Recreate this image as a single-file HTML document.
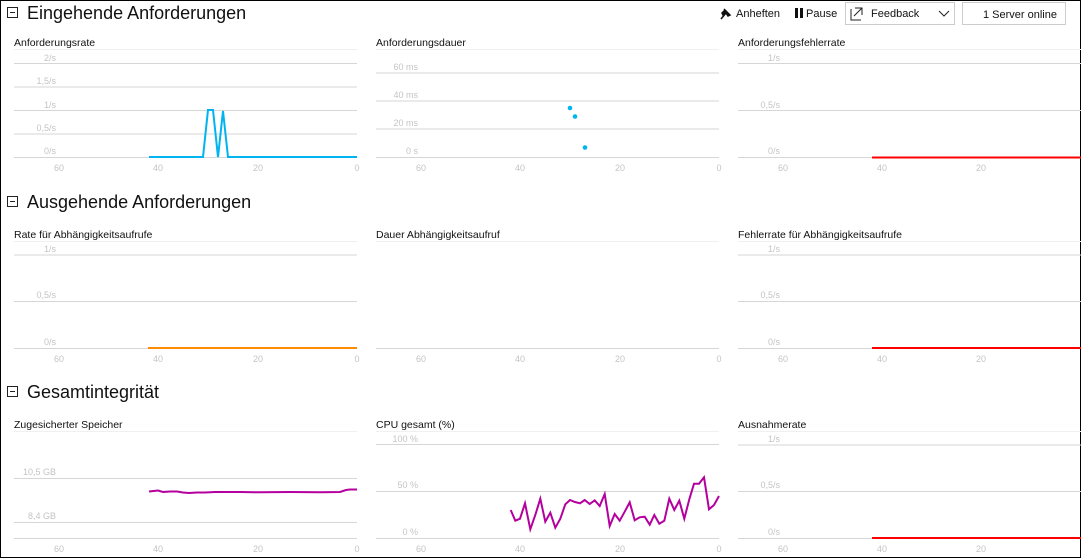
<!DOCTYPE html>
<html><head><meta charset="utf-8"><style>
html,body{margin:0;padding:0;background:#fff;}
body{width:1082px;height:559px;overflow:hidden;position:relative;font-family:"Liberation Sans",sans-serif;}
svg{position:absolute;left:0;top:0;}
</style></head><body>
<svg width="1082" height="559" viewBox="0 0 1082 559" font-family="Liberation Sans, sans-serif">
<rect x="0.5" y="0.5" width="1080" height="557" fill="#fff" stroke="#000"/>
<!-- section headers -->
<g fill="none" stroke="#222" stroke-width="1">
<rect x="7.5" y="7.5" width="10" height="10"/><line x1="10" y1="12.5" x2="15" y2="12.5"/>
<rect x="7.5" y="196.5" width="10" height="10"/><line x1="10" y1="201.5" x2="15" y2="201.5"/>
<rect x="7.5" y="386.5" width="10" height="10"/><line x1="10" y1="391.5" x2="15" y2="391.5"/>
</g>
<g font-size="18" fill="#111">
<text x="27" y="19">Eingehende Anforderungen</text>
<text x="27" y="208">Ausgehende Anforderungen</text>
<text x="27" y="398">Gesamtintegrität</text>
</g>
<!-- top right controls -->
<path d="M721 19 L726 13 M724 9 L730 15 L728 16 L726 13 L723 15 L722 13 L725 10 Z" stroke="#111" fill="#111" stroke-width="1.5"/>
<text x="736" y="17" font-size="11" fill="#111">Anheften</text>
<rect x="795" y="8" width="3" height="10" fill="#111"/><rect x="800" y="8" width="3" height="10" fill="#111"/>
<text x="806" y="17" font-size="11" fill="#111">Pause</text>
<rect x="845.5" y="2.5" width="109" height="22" fill="#fff" stroke="#ccc"/>
<path d="M851 9 V20 H861 M855 8 H862 V15 M862 8 L854 16" fill="none" stroke="#222"/>
<text x="871" y="17" font-size="11" fill="#111">Feedback</text>
<path d="M939 11 L944 16 L949 11" fill="none" stroke="#222"/>
<rect x="962.5" y="2.5" width="103" height="22" fill="#fff" stroke="#ccc"/>
<text x="983" y="18" font-size="11" fill="#111">1 Server online</text>
<!-- chart titles -->
<g font-size="10.5" fill="#111">
<text x="14" y="46">Anforderungsrate</text>
<text x="376" y="46">Anforderungsdauer</text>
<text x="738" y="46">Anforderungsfehlerrate</text>
<text x="14" y="238">Rate für Abhängigkeitsaufrufe</text>
<text x="376" y="238">Dauer Abhängigkeitsaufruf</text>
<text x="738" y="238">Fehlerrate für Abhängigkeitsaufrufe</text>
<text x="14" y="428">Zugesicherter Speicher</text>
<text x="376" y="428">CPU gesamt (%)</text>
<text x="738" y="428">Ausnahmerate</text>
</g>
<!-- top faint lines -->
<g stroke="#f0f0f0">
<line x1="14" y1="49.5" x2="357" y2="49.5"/><line x1="376" y1="49.5" x2="719" y2="49.5"/><line x1="738" y1="49.5" x2="1081" y2="49.5"/>
<line x1="14" y1="241.5" x2="357" y2="241.5"/><line x1="376" y1="241.5" x2="719" y2="241.5"/><line x1="738" y1="241.5" x2="1081" y2="241.5"/>
<line x1="14" y1="431.5" x2="357" y2="431.5"/><line x1="376" y1="431.5" x2="719" y2="431.5"/><line x1="738" y1="431.5" x2="1081" y2="431.5"/>
</g>
<!-- gridlines -->
<g stroke="#d6d6d6">
<line x1="14" y1="63.5" x2="357" y2="63.5"/><line x1="14" y1="87" x2="357" y2="87"/><line x1="14" y1="110.5" x2="357" y2="110.5"/><line x1="14" y1="134" x2="357" y2="134"/><line x1="14" y1="157.5" x2="357" y2="157.5"/>
<line x1="376" y1="73" x2="719" y2="73"/><line x1="376" y1="101" x2="719" y2="101"/><line x1="376" y1="129" x2="719" y2="129"/><line x1="376" y1="157.5" x2="719" y2="157.5"/>
<line x1="738" y1="63.5" x2="1081" y2="63.5"/><line x1="738" y1="110.5" x2="1081" y2="110.5"/><line x1="738" y1="157.5" x2="1081" y2="157.5"/>
<line x1="14" y1="255" x2="357" y2="255"/><line x1="14" y1="301.5" x2="357" y2="301.5"/><line x1="14" y1="348.5" x2="357" y2="348.5"/>
<line x1="376" y1="348.5" x2="719" y2="348.5"/>
<line x1="738" y1="255" x2="1081" y2="255"/><line x1="738" y1="301.5" x2="1081" y2="301.5"/><line x1="738" y1="348.5" x2="1081" y2="348.5"/>
<line x1="14" y1="478.5" x2="357" y2="478.5"/><line x1="14" y1="522.5" x2="357" y2="522.5"/><line x1="14" y1="538.5" x2="357" y2="538.5"/>
<line x1="376" y1="444.5" x2="719" y2="444.5"/><line x1="376" y1="491.5" x2="719" y2="491.5"/><line x1="376" y1="538.5" x2="719" y2="538.5"/>
<line x1="738" y1="445" x2="1081" y2="445"/><line x1="738" y1="491.5" x2="1081" y2="491.5"/><line x1="738" y1="538.5" x2="1081" y2="538.5"/>
</g>
<!-- y labels -->
<g font-size="9" fill="#c4c4c4" text-anchor="end">
<text x="56" y="61">2/s</text><text x="56" y="84">1,5/s</text><text x="56" y="108">1/s</text><text x="56" y="131">0,5/s</text><text x="56" y="154">0/s</text>
<text x="418" y="70">60 ms</text><text x="418" y="98">40 ms</text><text x="418" y="126">20 ms</text><text x="418" y="154">0 s</text>
<text x="780" y="61">1/s</text><text x="780" y="108">0,5/s</text><text x="780" y="154">0/s</text>
<text x="56" y="252">1/s</text><text x="56" y="298">0,5/s</text><text x="56" y="345">0/s</text>
<text x="780" y="252">1/s</text><text x="780" y="298">0,5/s</text><text x="780" y="345">0/s</text>
<text x="56" y="475">10,5 GB</text><text x="56" y="519">8,4 GB</text>
<text x="418" y="442">100 %</text><text x="418" y="488">50 %</text><text x="418" y="535">0 %</text>
<text x="780" y="442">1/s</text><text x="780" y="488">0,5/s</text><text x="780" y="535">0/s</text>
</g>
<!-- x labels -->
<g font-size="9" fill="#c4c4c4" text-anchor="middle">
<text x="59" y="171">60</text><text x="158" y="171">40</text><text x="258" y="171">20</text><text x="357" y="171">0</text>
<text x="421" y="171">60</text><text x="520" y="171">40</text><text x="620" y="171">20</text><text x="719" y="171">0</text>
<text x="783" y="171">60</text><text x="882" y="171">40</text><text x="981" y="171">20</text>
<text x="59" y="362">60</text><text x="158" y="362">40</text><text x="258" y="362">20</text><text x="357" y="362">0</text>
<text x="421" y="362">60</text><text x="520" y="362">40</text><text x="620" y="362">20</text><text x="719" y="362">0</text>
<text x="783" y="362">60</text><text x="882" y="362">40</text><text x="981" y="362">20</text>
<text x="59" y="552">60</text><text x="158" y="552">40</text><text x="258" y="552">20</text><text x="357" y="552">0</text>
<text x="421" y="552">60</text><text x="520" y="552">40</text><text x="620" y="552">20</text><text x="719" y="552">0</text>
<text x="783" y="552">60</text><text x="882" y="552">40</text><text x="981" y="552">20</text>
</g>
<!-- data -->
<polyline fill="none" stroke="#00b4f0" stroke-width="2" points="149,157 203,157 208,110 213,110 218,157 223,111 228,157 357,157"/>
<g fill="#00b4f0"><circle cx="570" cy="108" r="2.3"/><circle cx="575" cy="116.5" r="2.3"/><circle cx="585" cy="147.5" r="2.3"/></g>
<line x1="872" y1="157.5" x2="1081" y2="157.5" stroke="#f00" stroke-width="2"/>
<line x1="148" y1="348" x2="357" y2="348" stroke="#ff8c00" stroke-width="2"/>
<line x1="872" y1="348" x2="1081" y2="348" stroke="#f00" stroke-width="2"/>
<line x1="872" y1="538" x2="1081" y2="538" stroke="#f00" stroke-width="2"/>
<polyline fill="none" stroke="#b4009e" stroke-width="2" points="149,491.5 158,490.5 163,492 170,491.5 177,491.5 183,492.5 189,493 197,492.5 205,492.5 215,492 240,492 260,492.3 290,492 320,492.3 340,492 346,490 350,489.5 357,489.5"/>
<polyline fill="none" stroke="#b4009e" stroke-width="2" points="510.7,510 515.3,520.7 520,518.7 525,503.3 530.3,529.3 535.3,515 540.3,498.7 545.3,521.7 550.3,512.7 555.3,527.7 560.3,518.7 565.3,504.3 570,500 575,502 580,503.3 584.7,500 589.7,504 594.7,500.3 599.7,506 604.7,494 609.7,526 614.7,514 619.7,520.7 624.7,511.7 629.7,502.3 634.7,520.3 639.7,517.3 644.7,516.7 649.7,524.7 654.3,515 659.3,523.7 664.3,520.7 669.3,498.7 674.3,510 679.3,500.7 684.3,518.7 689.3,499.3 694,483.7 699,483.7 704,477.3 709,509.3 714,505 719,496"/>
</svg>
</body></html>
